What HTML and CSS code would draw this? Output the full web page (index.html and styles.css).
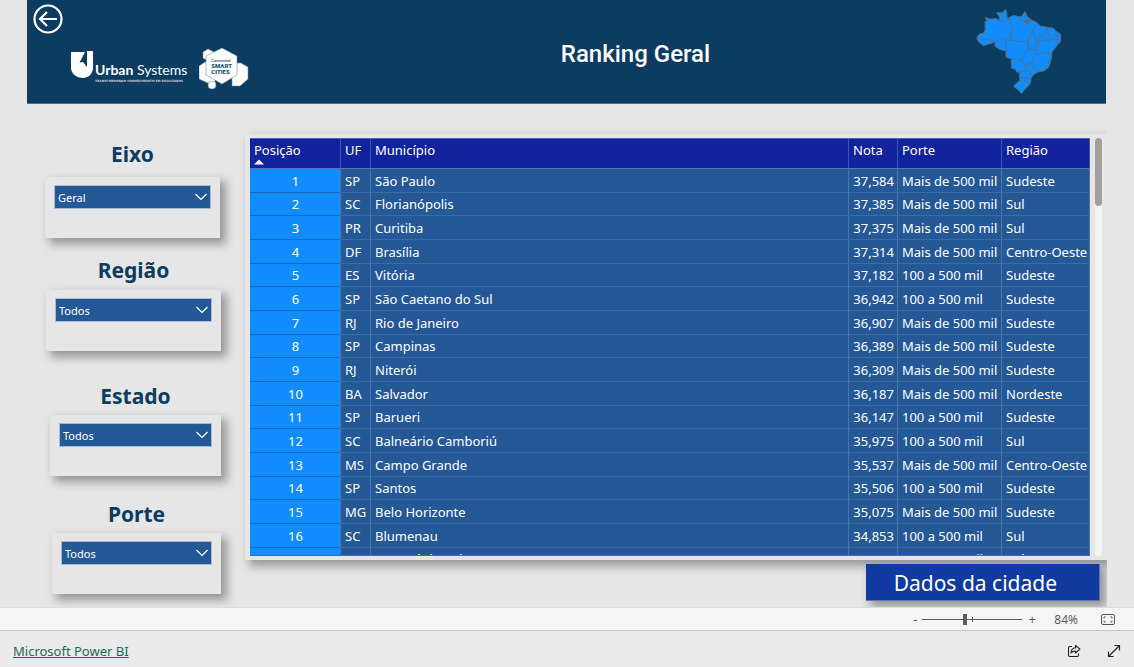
FILE: index.html
```html
<!DOCTYPE html>
<html lang="pt-BR">
<head>
<meta charset="utf-8">
<title>Ranking Geral</title>
<link rel="stylesheet" href="styles.css">
</head>
<body>
<div class="report">
  <header class="banner">
    <div class="brand">
      <button class="back" aria-label="Voltar">
        <svg width="30" height="30" viewBox="0 0 30 30" fill="none" stroke="#fff" stroke-width="2.2"><circle cx="15" cy="15" r="13.5"/><path d="M24 15H7M14 8l-7 7 7 7"/></svg>
      </button>
      <div class="logos">
        <svg class="shield" width="23" height="28" viewBox="0 0 23 28"><path fill="#fff" d="M0 1h14L8.500 11.500 12 11l4 5V0h6v17c0 6-5 10-10 10S1 24 0 18z"/></svg>
        <div class="urban-words">
          <div class="urban-name"><b>Urban</b> Systems</div>
          <div class="urban-tag">TRANSFORMANDO CONHECIMENTO EM RESULTADOS</div>
        </div>
        <div class="smart">
          <svg width="50" height="42" viewBox="0 0 50 42"><g fill="#fff" stroke="#6f8ba2" stroke-width=".6"><path d="M4 4l5-3 6 3v6l-6 3-5-3zM0 18l6-4h10v22h-5l-11-5zM33 15h9l7 4v12l-8 7h-8z"/><path d="M7 8L23 0l15 8v19L23 36 7 27z"/><circle cx="13" cy="37" r="4"/></g></svg>
          <div class="smart-text"><small>Connected</small>SMART<br>CITIES</div>
        </div>
      </div>
    </div>
    <h1>Ranking Geral</h1>
    <svg class="map" width="86" height="87" viewBox="18 12 258 260" role="img" aria-label="Mapa do Brasil">
      <g stroke="#50708c" stroke-width="3" stroke-linejoin="round">
        <path fill="#118dff" d="M45 40L60 45 78 43 88 50 88 38 80 26 97 26 107 16 110 25 112 45 117 40 130 34 150 38 157 35 165 22 172 38 185 48 200 55 212 66 235 70 250 72 258 82 270 88 272 98V112L262 122 255 132 246 143 244 160 240 178 235 190 222 200 205 203 190 212 183 222 182 235 175 245 162 258 155 269 148 260 131 247 140 236 150 230 148 210 152 202 142 205 135 195 124 192V165L108 158V140L90 136 75 126V114L55 120 40 124 28 115 20 103 28 90 42 86 46 75 45 52 52 52z"/>
        <path fill="none" d="M88 50l4 2 8-2 3 4 9-9 6-3 2 13 10 10-8 30 2 13M24 103l31 4 20 7 17-11 16 5 16 0 21 4 27 1M108 108l-2 14 3 18M150 38l10 12 5 2 5 8 15-12M200 60l-15 22-10 31v22l23 2M172 113l3 22-7 10-13 15-2 10-13-7-16 2M188 82l4 13 8 17-2 37M230 70l-8 22-17 8-1 15 16-7h20l15-4 17 4M232 72l4 23 6 10M252 96l6-8 8 8M250 98h22M252 112l16 4M198 149l17-1 20-3 8 13M200 148l-10 12 2 10-14 8-10 2 22 3 5 12 10 8M153 170l15 15-8 15-12 6M160 200l20 0 5 15M148 220l34 3M150 230h20l9 9M240 163l-6 20-20 16"/>
        <path fill="#666" d="M164 52l8-7 4 5 6-2-4 7-8 4z"/>
      </g>
    </svg>
  </header>

  <div class="content">
    <aside class="filters">
      <section class="filter filter-first">
        <label for="eixo">Eixo</label>
        <div class="card"><div class="picker">
          <select id="eixo"><option>Geral</option></select>
          <svg class="chevron" width="14" height="10" viewBox="0 0 14 10"><path d="M1.500 2L7 7.500 12.500 2"/></svg>
        </div></div>
      </section>
      <section class="filter filter-region">
        <label for="regiao">Região</label>
        <div class="card"><div class="picker">
          <select id="regiao"><option>Todos</option></select>
          <svg class="chevron" width="14" height="10" viewBox="0 0 14 10"><path d="M1.500 2L7 7.500 12.500 2"/></svg>
        </div></div>
      </section>
      <section class="filter filter-state">
        <label for="estado">Estado</label>
        <div class="card"><div class="picker">
          <select id="estado"><option>Todos</option></select>
          <svg class="chevron" width="14" height="10" viewBox="0 0 14 10"><path d="M1.500 2L7 7.500 12.500 2"/></svg>
        </div></div>
      </section>
      <section class="filter filter-size">
        <label for="porte">Porte</label>
        <div class="card"><div class="picker">
          <select id="porte"><option>Todos</option></select>
          <svg class="chevron" width="14" height="10" viewBox="0 0 14 10"><path d="M1.500 2L7 7.500 12.500 2"/></svg>
        </div></div>
      </section>
    </aside>

    <main class="ranking">
      <div class="table-card">
        <div class="table-view">
          <table>
            <colgroup><col class="c-pos"><col class="c-uf"><col><col class="c-nota"><col class="c-porte"><col class="c-regiao"></colgroup>
            <thead><tr><th>Posição<svg class="sort" width="12" height="6" viewBox="0 0 12 6"><path fill="#fff" d="M1 5.500L6 .5l5 5z"/></svg></th><th>UF</th><th>Município</th><th>Nota</th><th>Porte</th><th>Região</th></tr></thead>
            <tbody>
              <tr><td>1</td><td>SP</td><td>São Paulo</td><td>37,584</td><td>Mais de 500 mil</td><td>Sudeste</td></tr>
              <tr><td>2</td><td>SC</td><td>Florianópolis</td><td>37,385</td><td>Mais de 500 mil</td><td>Sul</td></tr>
              <tr><td>3</td><td>PR</td><td>Curitiba</td><td>37,375</td><td>Mais de 500 mil</td><td>Sul</td></tr>
              <tr><td>4</td><td>DF</td><td>Brasília</td><td>37,314</td><td>Mais de 500 mil</td><td>Centro-Oeste</td></tr>
              <tr><td>5</td><td>ES</td><td>Vitória</td><td>37,182</td><td>100 a 500 mil</td><td>Sudeste</td></tr>
              <tr><td>6</td><td>SP</td><td>São Caetano do Sul</td><td>36,942</td><td>100 a 500 mil</td><td>Sudeste</td></tr>
              <tr><td>7</td><td>RJ</td><td>Rio de Janeiro</td><td>36,907</td><td>Mais de 500 mil</td><td>Sudeste</td></tr>
              <tr><td>8</td><td>SP</td><td>Campinas</td><td>36,389</td><td>Mais de 500 mil</td><td>Sudeste</td></tr>
              <tr><td>9</td><td>RJ</td><td>Niterói</td><td>36,309</td><td>Mais de 500 mil</td><td>Sudeste</td></tr>
              <tr><td>10</td><td>BA</td><td>Salvador</td><td>36,187</td><td>Mais de 500 mil</td><td>Nordeste</td></tr>
              <tr><td>11</td><td>SP</td><td>Barueri</td><td>36,147</td><td>100 a 500 mil</td><td>Sudeste</td></tr>
              <tr><td>12</td><td>SC</td><td>Balneário Camboriú</td><td>35,975</td><td>100 a 500 mil</td><td>Sul</td></tr>
              <tr><td>13</td><td>MS</td><td>Campo Grande</td><td>35,537</td><td>Mais de 500 mil</td><td>Centro-Oeste</td></tr>
              <tr><td>14</td><td>SP</td><td>Santos</td><td>35,506</td><td>100 a 500 mil</td><td>Sudeste</td></tr>
              <tr><td>15</td><td>MG</td><td>Belo Horizonte</td><td>35,075</td><td>Mais de 500 mil</td><td>Sudeste</td></tr>
              <tr><td>16</td><td>SC</td><td>Blumenau</td><td>34,853</td><td>100 a 500 mil</td><td>Sul</td></tr>
              <tr><td>17</td><td>SC</td><td>Jaraguá do Sul</td><td>34,774</td><td>100 a 500 mil</td><td>Sul</td></tr>
            </tbody>
          </table>
        </div>
        <div class="scroll"><div class="thumb"></div></div>
      </div>
      <button class="city">Dados da cidade</button>
    </main>
  </div>
</div>

<div class="zoombar">
  <button class="step" aria-label="Reduzir">-</button>
  <input class="zoom" type="range" min="0" max="100" value="42" aria-label="Zoom">
  <button class="step" aria-label="Ampliar">+</button>
  <span class="percent">84%</span>
  <button class="icon" aria-label="Ajustar à página">
    <svg width="14" height="11" viewBox="0 0 14 11" fill="none" stroke="#555"><rect x=".5" y=".5" width="13" height="10" rx="1.500"/><path d="M3 4.500v-1.500h1.500M9.500 3H11v1.500M11 6.500V8H9.500M4.500 8H3V6.500"/></svg>
  </button>
</div>
<footer class="footer">
  <a href="#">Microsoft Power BI</a>
  <div class="actions">
    <button class="icon" aria-label="Compartilhar">
      <svg width="14" height="14" viewBox="0 0 14 14" fill="none" stroke="#222" stroke-width="1.100" stroke-linejoin="round"><path d="M5 2.500H3A1.500 1.500 0 0 0 1.500 4v7A1.500 1.500 0 0 0 3 12.500h7A1.500 1.500 0 0 0 11.500 11V9.500"/><path d="M8.500 1.500L13 5.200 8.500 9V7C6.500 7 5 7.500 4 9c0-3 1.500-5 4.500-5.300z"/></svg>
    </button>
    <button class="icon" aria-label="Tela inteira">
      <svg width="14" height="14" viewBox="0 0 14 14" fill="none" stroke="#222" stroke-width="1.200"><path d="M1.500 12.500l11-11M7.500 1.500h5v5M1.500 7.500v5h5"/></svg>
    </button>
  </div>
</footer>
</body>
</html>
```
FILE: styles.css
```css
* { box-sizing: border-box; }

body {
  margin: 0;
  min-height: 100vh;
  display: flex;
  flex-direction: column;
  background: #e6e6e6;
  font-family: "Noto Sans", "Open Sans", sans-serif;
  font-size: 13px;
}

button {
  padding: 0;
  border: 0;
  background: none;
  font: inherit;
  color: inherit;
}

svg { display: block; }

.report {
  flex: 1;
  display: flex;
  flex-direction: column;
  margin: 0 27px;
  overflow: hidden;
}

/* Banner */
.banner {
  display: grid;
  grid-template-columns: 3fr auto 2fr;
  height: 104px;
  margin-right: 1px;
  padding: 4px 44px 0 6px;
  border-bottom: 1px solid #4c6f90;
  background: #0c3c60;
  color: #fff;
}

.banner h1 {
  margin: 0;
  font: 500 24px/100px Roboto, sans-serif;
}

.map { justify-self: end; margin-top: 4px; }

.logos {
  display: flex;
  margin: 10px 0 0 38px;
}

.shield { margin-top: 3px; }

.urban-words { margin-top: 13px; }

.urban-name {
  margin-left: 1px;
  font: 14px/18px Lato, sans-serif;
  white-space: nowrap;
}

.urban-tag {
  margin-left: 1px;
  color: #c3d0dc;
  font: 700 3px/4px "DejaVu Sans", sans-serif;
  white-space: nowrap;
}

.smart {
  display: grid;
  margin-left: 12px;
}

.smart > * { grid-area: 1 / 1; }

.smart-text {
  margin: 11px 0 0 12px;
  color: #2a5475;
  font: 900 6px/6px Roboto, sans-serif;
}

.smart-text small {
  display: block;
  font-size: 4px;
  font-weight: 500;
  line-height: 4px;
}

/* Filters */
.content {
  flex: 1;
  display: flex;
}

.filters {
  flex: none;
  width: 218px;
  padding: 36px 24px 0 18px;
}

.filter {
  display: flex;
  flex-direction: column;
  gap: 5px;
}

.filter label {
  color: #0c3c60;
  font-size: 21px;
  font-weight: 700;
  line-height: 28px;
  text-align: center;
}

.filter-first { gap: 9px; margin-right: 1px; }
.filter-region { gap: 6px; margin: 18px 0 0 1px; }
.filter-state { margin: 31px 0 0 5px; }
.filter-size { margin: 24px 0 0 7px; }

.card {
  height: 61px;
  padding: 8px 9px;
  background: #e6e6e6;
  box-shadow: 5px 5px 9px 1px rgba(0, 0, 0, .35);
}

.picker { display: grid; }
.picker > * { grid-area: 1 / 1; }

.picker select {
  appearance: none;
  width: 100%;
  height: 24px;
  padding: 0 3px;
  border: 1px solid #a9bad0;
  border-radius: 0;
  background: #255896;
  color: #fff;
  font: 11px "Noto Sans", sans-serif;
}

.chevron {
  place-self: center end;
  margin-right: 3px;
  fill: none;
  stroke: #fff;
  stroke-width: 1.2;
  pointer-events: none;
}

/* Ranking table */
.ranking {
  flex: 1;
  display: flex;
  flex-direction: column;
  gap: 4px;
  padding: 30px 0 6px;
}

.table-card {
  flex: 1 0 0;
  display: flex;
  gap: 5px;
  padding: 4px 5px;
  background: #e6e6e6;
  box-shadow: 5px 5px 9px 1px rgba(0, 0, 0, .35);
}

.table-view {
  flex: 1;
  height: 418px;
  overflow: hidden;
  border: solid #4268b8;
  border-width: 1px 0;
}

table {
  width: 100%;
  table-layout: fixed;
  border-collapse: separate;
  border-spacing: 0;
  color: #fff;
  line-height: 18px;
  white-space: nowrap;
}

.c-pos { width: 91px; }
.c-uf { width: 30px; }
.c-nota { width: 49px; }
.c-porte { width: 104px; }
.c-regiao { width: 88px; }

th {
  height: 30px;
  padding: 2px 4px 0;
  border-right: 1px solid #3f52b0;
  border-bottom: 1px solid #5578b4;
  background: #12239e;
  font-weight: 400;
  text-align: left;
  vertical-align: top;
}

.sort { margin-left: -1px; }

td {
  height: 24px;
  padding: 0 3px 0 4px;
  border-right: 1px solid #4c75a9;
  border-bottom: 1px solid #3e6ba3;
  background: #255896;
}

tr:nth-child(3n + 2) td { height: 23px; }

td:first-child {
  border-bottom-color: #1c68b8;
  background: #118dff;
  text-align: center;
}

td:nth-child(4) { text-align: right; }

.scroll {
  width: 7px;
  border-radius: 4px;
  background: #f3f3f3;
}

.thumb {
  height: 68px;
  border-radius: 4px;
  background: #a19f9d;
}

.city {
  align-self: flex-end;
  height: 37px;
  margin-right: 7px;
  padding: 2px 42px 0 28px;
  border: solid #5a78bd;
  border-width: 0 1px 1px 0;
  background: #113aa0;
  box-shadow: 5px 5px 9px 1px rgba(0, 0, 0, .35);
  color: #fff;
  font-size: 21px;
}

/* Zoom bar and footer */
.zoombar {
  display: flex;
  align-items: center;
  justify-content: flex-end;
  height: 24px;
  padding-right: 19px;
  border: solid #dcdcdc;
  border-width: 1px 0;
  border-bottom-color: #c6c6c6;
  background: #f5f5f5;
  color: #605e5c;
}

.step { width: 8px; line-height: 20px; }

.zoom {
  appearance: none;
  width: 100px;
  height: 12px;
  margin: 0 6px 0 3px;
  background:
    linear-gradient(#605e5c, #605e5c) 50px 50% / 1px 5px no-repeat,
    linear-gradient(#605e5c, #605e5c) 0 50% / 100% 1px no-repeat;
}

.zoom::-webkit-slider-thumb {
  appearance: none;
  width: 4px;
  height: 11px;
  background: #605e5c;
}

.percent {
  margin: 0 23px 0 18px;
  font-size: 12px;
}

.footer {
  display: flex;
  align-items: center;
  justify-content: space-between;
  height: 36px;
  padding: 3px 13px 0;
  background: #eaeaea;
}

.footer a { color: #1a6b5e; }

.actions { display: flex; gap: 26px; }
```
